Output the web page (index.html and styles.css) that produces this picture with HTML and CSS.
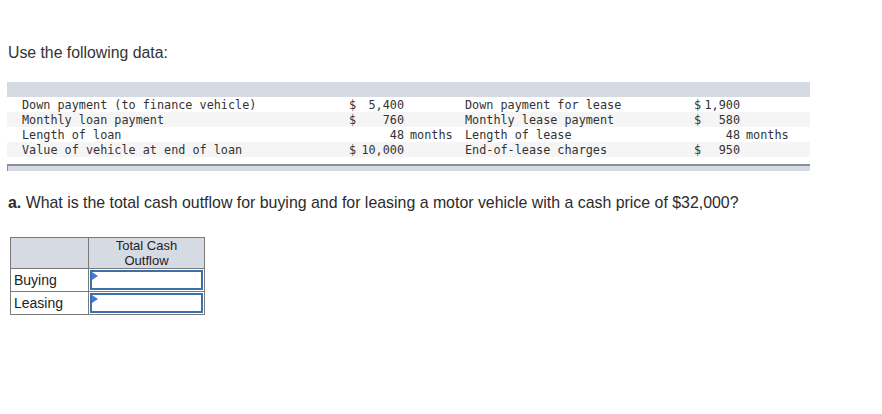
FILE: index.html
```html
<!DOCTYPE html>
<html>
<head>
<meta charset="utf-8">
<link rel="stylesheet" href="styles.css">
</head>
<body>
<p class="intro">Use the following data:</p>
<div class="data">
  <div class="band-top"></div>
  <div class="row">
    <span class="lbl">Down payment (to finance vehicle)</span><span class="cur">$</span><span class="num">5,400</span><span class="unit"></span>
    <span class="lbl">Down payment for lease</span><span class="cur">$</span><span class="num">1,900</span><span class="unit"></span>
  </div>
  <div class="row alt">
    <span class="lbl">Monthly loan payment</span><span class="cur">$</span><span class="num">760</span><span class="unit"></span>
    <span class="lbl">Monthly lease payment</span><span class="cur">$</span><span class="num">580</span><span class="unit"></span>
  </div>
  <div class="row">
    <span class="lbl">Length of loan</span><span class="cur"></span><span class="num">48</span><span class="unit">months</span>
    <span class="lbl">Length of lease</span><span class="cur"></span><span class="num">48</span><span class="unit">months</span>
  </div>
  <div class="row alt">
    <span class="lbl">Value of vehicle at end of loan</span><span class="cur">$</span><span class="num">10,000</span><span class="unit"></span>
    <span class="lbl">End-of-lease charges</span><span class="cur">$</span><span class="num">950</span><span class="unit"></span>
  </div>
  <div class="band-bottom"></div>
</div>
<p class="question"><b>a.</b> What is the total cash outflow for buying and for leasing a motor vehicle with a cash price of $32,000?</p>
<table class="answer">
  <tr class="head"><th class="corner"></th><th class="colh">Total Cash<br>Outflow</th></tr>
  <tr><td class="rowh">Buying</td><td class="inp"><div class="box"><span class="flag"></span></div></td></tr>
  <tr><td class="rowh">Leasing</td><td class="inp"><div class="box"><span class="flag"></span></div></td></tr>
</table>
</body>
</html>
```
FILE: styles.css
```css
html, body {
  margin: 0;
  padding: 0;
  background: #fff;
}
body {
  font-family: "Liberation Sans", Arial, sans-serif;
  color: #333;
}
.intro {
  margin: 0;
  padding: 44px 0 0 8px;
  font-size: 15.8px;
  line-height: 18px;
  height: 38px;
}
.data {
  margin-left: 7px;
  width: 803px;
  font-family: "DejaVu Sans Mono", "Liberation Mono", monospace;
  font-size: 11.8px;
  color: #333;
}
.band-top {
  height: 15px;
  background: #d6dae3;
}
.row {
  display: grid;
  grid-template-columns: 327px 8px 47px 61px 229px 8px 38px 70px;
  padding-left: 15px;
  height: 15px;
  line-height: 16px;
  white-space: pre;
}
.row.alt {
  background: #f5f5f5;
}
.num {
  text-align: right;
}
.unit {
  padding-left: 6px;
}
.band-bottom {
  margin-top: 7px;
  height: 5px;
  background: #d6dae3;
  border-top: 2px solid #8c8f95;
  border-left: 1px solid #8c8f95;
}
.question {
  margin: 0;
  padding-top: 23px;
  padding-left: 8px;
  font-size: 15.9px;
  line-height: 18px;
  height: 43px;
  color: #2b2b2b;
}
.question b {
  font-weight: bold;
}
.answer {
  margin-left: 10px;
  border-collapse: collapse;
  font-family: "Liberation Sans", Arial, sans-serif;
  color: #222;
}
.answer th, .answer td {
  border: 1px solid #7a7a7a;
  padding: 0;
}
.head th {
  background: #d6dae3;
  height: 30px;
  font-weight: normal;
  font-size: 13px;
  line-height: 15px;
}
.corner {
  width: 77px;
}
.colh {
  width: 115px;
}
.rowh {
  height: 22px;
  font-size: 14px;
  padding-left: 3px !important;
  text-align: left;
}
.inp {
  position: relative;
}
.box {
  height: 16px;
  margin: 1px;
  border: 2px solid #3d6fa8;
  position: relative;
}
.flag {
  position: absolute;
  left: 0;
  top: 0;
  width: 0;
  height: 0;
  border-top: 4px solid transparent;
  border-bottom: 4px solid transparent;
  border-left: 6px solid #3d7dd6;
}
```
